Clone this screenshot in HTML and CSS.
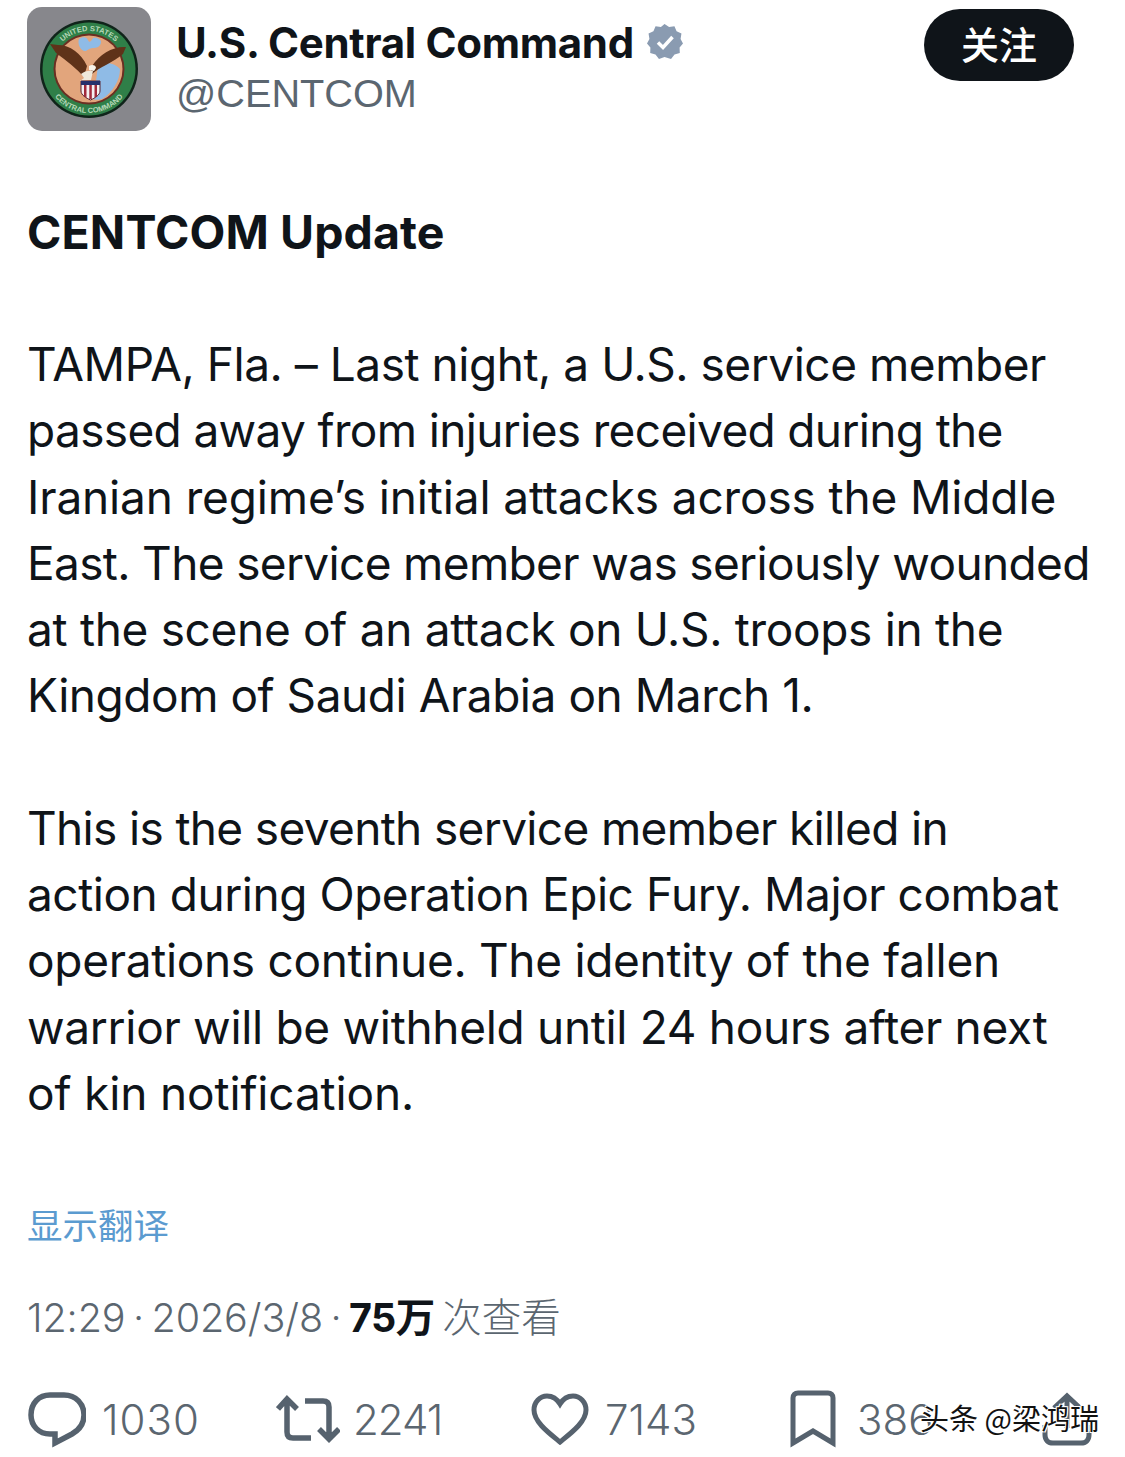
FILE: index.html
```html
<!DOCTYPE html>
<html lang="en">
<head>
<meta charset="utf-8">
<title>CENTCOM Update</title>
<link rel="stylesheet" href="styles.css">
</head>
<body>
<main class="post">
  <header class="head">
    <div class="avatar">
      <svg class="emblem" viewBox="0 0 100 100" width="100" height="100" aria-hidden="true">
        <circle cx="50" cy="50" r="49" fill="#10241a"/>
        <circle cx="50" cy="50" r="46.500" fill="#2f7f48"/>
        <circle cx="50" cy="50" r="35.500" fill="#6b2f22"/>
        <circle cx="50" cy="50" r="33.500" fill="#e2a57c"/>
        <path d="M40 20c4-3 8-2 9 1s3 2 5-2c3-1 8 1 8 4s-3 6-7 6-5 1-8 3c-5 1-9-7-7-12zM60 46c6-4 16-2 21 4 0 12-8 24-18 30-6 2-12 0-16-4 6-2 9-8 10-14 1-6 1-12 3-16z" fill="#8fbbe6"/>
        <defs>
          <path id="arcTop" d="M12 50A38 38 0 0 1 88 50"/>
          <path id="arcBot" d="M6 50A44 44 0 0 0 94 50"/>
        </defs>
        <text class="ring-text"><textPath href="#arcTop" startOffset="50%" text-anchor="middle">UNITED STATES</textPath></text>
        <text class="ring-text"><textPath href="#arcBot" startOffset="50%" text-anchor="middle">CENTRAL COMMAND</textPath></text>
        <path d="M11 25l8 1c12 0 23 8 29 21l-3 11C38 50 28 42 17 34z" fill="#5f3219"/>
        <path d="M87 28c-13-1-26 7-34 19l-2 10c10-10 23-13 33-22z" fill="#5f3219"/>
        <path d="M42 55c3-3 9-4 12-3l-2 9-11 1 4-3z" fill="#efe8da"/>
        <path d="M50 47c3-2 7-1 7 2l-2 3-5-1z" fill="#f7f3ea"/>
        <path d="M42 62h19v10c0 4-5 7-9.500 9C47 79 42 76 42 72z" fill="#f4f0f2" stroke="#5a2430"/>
        <path d="M42 62h19v4H42z" fill="#27306b"/>
        <path d="M45 66h2.500v13l-2.500-2zM50.300 66h2.500v14h-2.500zM55.500 66H58v11l-2.500 2z" fill="#a12a3c"/>
      </svg>
    </div>
    <div class="who">
      <div class="name-row">
        <span class="name">U.S. Central Command</span>
        <svg class="badge" viewBox="0 0 36 36" width="36" height="36" aria-hidden="true">
          <path d="M18 1l4.700 3 5.500-.6 2.200 5.100 5 2.400-.9 5.500L37 21l-3.500 4.300.2 5.600-5.400 1.500L24.700 37 18 34.900 12.300 37l-3.600-4.600-5.400-1.500.2-5.600L0 21l2.500-4.600-.9-5.500 5-2.400 2.200-5.100 5.500.6z" transform="translate(0 -1) scale(.973)" fill="#8a9bb1"/>
          <path d="M11 18.500l5 5 9.500-10.500" fill="none" stroke="#fff" stroke-width="3.500"/>
        </svg>
      </div>
      <div class="handle">@CENTCOM</div>
    </div>
    <button class="follow" type="button">关注</button>
  </header>

  <h1 class="title">CENTCOM Update</h1>

  <p class="para">
    <span class="ln ls-b">TAMPA, Fla. – Last night, a U.S. service member</span>
    <span class="ln ls-a">passed away from injuries received during the</span>
    <span class="ln ls-d">Iranian regime’s initial attacks across the Middle</span>
    <span class="ln ls-a">East. The service member was seriously wounded</span>
    <span class="ln ls-c">at the scene of an attack on U.S. troops in the</span>
    <span class="ln ls-b">Kingdom of Saudi Arabia on March 1.</span>
  </p>

  <p class="para para-next">
    <span class="ln ls-a">This is the seventh service member killed in</span>
    <span class="ln ls-b">action during Operation Epic Fury. Major combat</span>
    <span class="ln ls-c">operations continue. The identity of the fallen</span>
    <span class="ln ls-c">warrior will be withheld until 24 hours after next</span>
    <span class="ln ls-d">of kin notification.</span>
  </p>

  <a class="translate">显示翻译</a>

  <div class="meta">12:29 · 2026/3/8 · <b class="views">75万</b> 次查看</div>

  <footer class="stats">
    <div class="stat stat-reply">
      <svg class="ico" viewBox="0 0 58 58" width="58" height="58" aria-hidden="true"><path d="M22 5h14c12 0 20 9 20 20 0 9-5 15-12 19l-17 9v-9h-5C11 44 3 36 3 25 3 13 11 5 22 5z" fill="none" stroke="#56626e" stroke-width="5.500"/></svg>
      <span class="num-wide">1030</span>
    </div>
    <div class="stat stat-rt">
      <svg class="ico" viewBox="0 0 64 48" width="64" height="48" aria-hidden="true"><path d="M11 4v33c0 4 2 6 6 6h18M2 14L11 4l10 10M29 6h18c4 0 6 2 6 6v32M43 34l10 10 10-10" fill="none" stroke="#56626e" stroke-width="5.500"/></svg>
      <span class="num-tight">2241</span>
    </div>
    <div class="stat stat-like">
      <svg class="ico" viewBox="0 0 58 52" width="58" height="52" aria-hidden="true"><path d="M29 49C18 40 3 29 3 17 3 9 9 3 16 3c6 0 10 3 13 8 3-5 7-8 13-8 7 0 13 6 13 14 0 12-15 23-26 32z" fill="none" stroke="#56626e" stroke-width="5"/></svg>
      <span>7143</span>
    </div>
    <div class="stat stat-save">
      <svg class="ico" viewBox="0 0 46 58" width="46" height="58" aria-hidden="true"><path d="M3 53V8c0-3 2-5 5-5h30c3 0 5 2 5 5v45L23 41z" fill="none" stroke="#56626e" stroke-width="5"/></svg>
      <span>386</span>
    </div>
    <svg class="ico" viewBox="0 0 50 54" width="50" height="54" aria-hidden="true"><path d="M25 36V5M12 16L25 4l13 12M3 33v10c0 5 3 8 8 8h28c5 0 8-3 8-8V33" fill="none" stroke="#56626e" stroke-width="5"/></svg>
  </footer>
  <div class="mark">头条 @梁鸿瑞</div>
</main>
</body>
</html>
```

FILE: styles.css
```css
* { box-sizing: border-box; }
html, body { margin: 0; background: #fff; }
body { width: 1125px; height: 1457px; overflow: hidden; }
.post {
  position: relative;
  height: 1457px;
  padding: 7px 0 0 27px;
  font-family: Inter, "Noto Sans CJK SC", sans-serif;
  color: #0f1419;
}
.head { display: flex; align-items: flex-start; }
.avatar {
  width: 124px; height: 124px; flex: none;
  display: flex; align-items: center; justify-content: center;
  background: #87878c;
  border-radius: 15px;
}
.ring-text { font: 700 7.500px "Liberation Sans", sans-serif; fill: #b6d8b8; }
.who { margin-left: 25px; width: 748px; }
.name-row { display: flex; align-items: center; height: 56px; margin-top: 7px; }
.name { font-size: 42px; font-weight: 700; letter-spacing: -0.3px; white-space: nowrap; }
.badge { margin-left: 13px; }
.handle {
  font-family: "Liberation Sans", sans-serif;
  font-size: 39.700px; line-height: 46px; color: #5b6670; white-space: nowrap;
}
.follow {
  width: 150px; height: 72px; margin-top: 2px; padding: 0 0 5px;
  border: 0; border-radius: 36px;
  background: #0f1419; color: #fff;
  font: 500 38px "Noto Sans CJK SC", sans-serif;
}
.title { margin: 73px 0 0; font-size: 46.500px; line-height: 56px; font-weight: 700; letter-spacing: 0.1px; }
.para {
  margin: 71px 0 0;
  font-size: 46px; line-height: 66.300px; font-weight: 400; white-space: nowrap;
}
.para-next { margin-top: 66px; }
.ln { display: block; }
.ls-a { letter-spacing: -0.65px; }
.ls-b { letter-spacing: -0.46px; }
.ls-c { letter-spacing: -0.31px; }
.ls-d { letter-spacing: -0.14px; }
.translate {
  display: block; margin: 76px 0 0;
  font: 400 35.500px/44px "Noto Sans CJK SC", sans-serif;
  color: #5b9bd0;
}
.meta {
  margin: 48px 0 0;
  font-size: 39.500px; font-weight: 300; line-height: 48px; color: #5b6670;
  letter-spacing: -0.1px; word-spacing: -3.500px; white-space: nowrap;
}
.views { color: #0f1419; font-weight: 700; letter-spacing: -0.5px; }
.stats {
  display: flex; align-items: center;
  margin: 46px 0 0 1px; height: 62px;
  font-size: 42px; font-weight: 300; color: #5b6670;
}
.stat { display: flex; align-items: center; gap: 16px; }
.num-wide { letter-spacing: 1px; }
.num-tight { letter-spacing: -1px; }
.stat-reply { width: 248px; }
.stat-rt { width: 255px; gap: 13px; }
.stat-like { width: 259px; }
.stat-save { width: 252px; gap: 21px; }
.mark {
  position: absolute; left: 920px; top: 1400px;
  font: 400 29px/34px "Noto Sans CJK SC", sans-serif;
  color: #111;
  white-space: nowrap;
  text-shadow: 1px 1px 0 #fff, -1px -1px 0 #fff, 1px -1px 0 #fff, -1px 1px 0 #fff;
}
```
